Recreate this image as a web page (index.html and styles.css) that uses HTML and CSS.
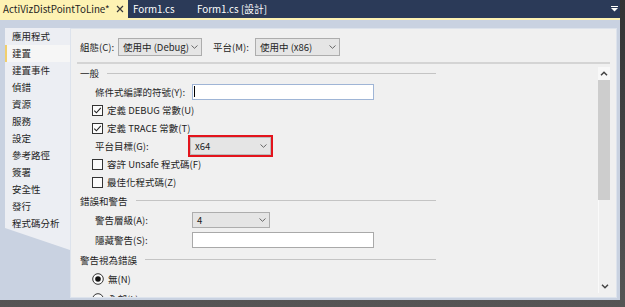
FILE: index.html
```html
<!DOCTYPE html>
<html lang="zh-Hant">
<head>
<meta charset="utf-8">
<title>Build</title>
<link rel="stylesheet" href="styles.css">
</head>
<body>
<div class="window">
  <div class="tabbar">
    <div class="tab active">
      <span>ActiVizDistPointToLine*</span>
      <svg class="close" width="8" height="8" viewBox="0 0 8 8"><path d="M1 1L7 7M7 1L1 7" stroke="#3a3a3a" stroke-width="1.2" fill="none"/></svg>
    </div>
    <div class="tab file">Form1.cs</div>
    <div class="tab design">Form1.cs [設計]</div>
    <div class="spacer"></div>
    <svg class="files-menu" width="7" height="6" viewBox="0 0 7 6"><rect x="0" y="0" width="7" height="1" fill="#fff"/><path d="M0 2H7L3.5 5.5Z" fill="#fff"/></svg>
  </div>
  <div class="accent"></div>
  <div class="main">
    <nav class="sidebar">
      <div class="nav-item">應用程式</div>
      <div class="nav-item selected">建置</div>
      <div class="nav-item">建置事件</div>
      <div class="nav-item">偵錯</div>
      <div class="nav-item">資源</div>
      <div class="nav-item">服務</div>
      <div class="nav-item">設定</div>
      <div class="nav-item">參考路徑</div>
      <div class="nav-item">簽署</div>
      <div class="nav-item">安全性</div>
      <div class="nav-item">發行</div>
      <div class="nav-item">程式碼分析</div>
    </nav>
    <section class="panel">
      <div class="config-row">
        <span class="cfg-label first">組態(C):</span>
        <div class="combo cfg-combo">
          <span>使用中 (Debug)</span>
          <svg class="chev" width="7" height="4" viewBox="0 0 7 4"><path d="M0.5 0.5L3.5 3.3L6.5 0.5" stroke="#666" stroke-width="1" fill="none"/></svg>
        </div>
        <span class="cfg-label second">平台(M):</span>
        <div class="combo cfg-combo wide">
          <span>使用中 (x86)</span>
          <svg class="chev" width="7" height="4" viewBox="0 0 7 4"><path d="M0.5 0.5L3.5 3.3L6.5 0.5" stroke="#666" stroke-width="1" fill="none"/></svg>
        </div>
      </div>
      <div class="sep"></div>
      <div class="scroll">
        <div class="form">
          <div class="section s18"><span>一般</span></div>
          <div class="row h19">
            <span class="label">條件式編譯的符號(Y):</span>
            <div class="textbox focused"><span class="caret"></span></div>
          </div>
          <div class="row check">
            <svg class="box" width="11" height="11" viewBox="0 0 11 11"><rect x="0.5" y="0.5" width="10" height="10" fill="#fbfbfb" stroke="#333"/><path d="M2.3 5.6L4.4 7.8L8.8 2.8" stroke="#222" stroke-width="1.1" fill="none"/></svg>
            <span>定義 DEBUG 常數(U)</span>
          </div>
          <div class="row check">
            <svg class="box" width="11" height="11" viewBox="0 0 11 11"><rect x="0.5" y="0.5" width="10" height="10" fill="#fbfbfb" stroke="#333"/><path d="M2.3 5.6L4.4 7.8L8.8 2.8" stroke="#222" stroke-width="1.1" fill="none"/></svg>
            <span>定義 TRACE 常數(T)</span>
          </div>
          <div class="row">
            <span class="label">平台目標(G):</span>
            <div class="highlight">
              <div class="combo target">
                <span>x64</span>
                <svg class="chev" width="7" height="4" viewBox="0 0 7 4"><path d="M0.5 0.5L3.5 3.3L6.5 0.5" stroke="#666" stroke-width="1" fill="none"/></svg>
              </div>
            </div>
          </div>
          <div class="row check">
            <svg class="box" width="11" height="11" viewBox="0 0 11 11"><rect x="0.5" y="0.5" width="10" height="10" fill="#fbfbfb" stroke="#333"/></svg>
            <span>容許 Unsafe 程式碼(F)</span>
          </div>
          <div class="row check">
            <svg class="box" width="11" height="11" viewBox="0 0 11 11"><rect x="0.5" y="0.5" width="10" height="10" fill="#fbfbfb" stroke="#333"/></svg>
            <span>最佳化程式碼(Z)</span>
          </div>
          <div class="section s19"><span>錯誤和警告</span></div>
          <div class="row h20">
            <span class="label">警告層級(A):</span>
            <div class="combo level">
              <span>4</span>
              <svg class="chev" width="7" height="4" viewBox="0 0 7 4"><path d="M0.5 0.5L3.5 3.3L6.5 0.5" stroke="#666" stroke-width="1" fill="none"/></svg>
            </div>
          </div>
          <div class="row h20">
            <span class="label">隱藏警告(S):</span>
            <div class="textbox"></div>
          </div>
          <div class="section s19"><span>警告視為錯誤</span></div>
          <div class="row check h20">
            <svg class="box" width="12" height="12" viewBox="0 0 12 12"><circle cx="6" cy="6" r="5.3" fill="#fbfbfb" stroke="#333"/><circle cx="6" cy="6" r="2.8" fill="#111"/></svg>
            <span>無(N)</span>
          </div>
          <div class="row check h20">
            <svg class="box" width="12" height="12" viewBox="0 0 12 12"><circle cx="6" cy="6" r="5.3" fill="#fbfbfb" stroke="#333"/></svg>
            <span>全部(L)</span>
          </div>
        </div>
        <div class="scrollbar">
          <div class="sb-btn">
            <svg width="8" height="5" viewBox="0 0 8 5"><path d="M1 4.2L4 1.2L7 4.2" stroke="#444" stroke-width="1.5" fill="none"/></svg>
          </div>
          <div class="sb-thumb"></div>
          <div class="sb-track"></div>
          <div class="sb-btn down">
            <svg width="8" height="5" viewBox="0 0 8 5"><path d="M1 0.8L4 3.8L7 0.8" stroke="#444" stroke-width="1.5" fill="none"/></svg>
          </div>
        </div>
      </div>
    </section>
  </div>
</div>
</body>
</html>
```

FILE: styles.css
```css
* {
  box-sizing: border-box;
  margin: 0;
  padding: 0;
}

html, body {
  width: 625px;
  height: 307px;
  overflow: hidden;
}

body {
  background: linear-gradient(#333, #555);
  font-family: "Noto Sans CJK TC", "Noto Sans", sans-serif;
  font-size: 9.5px;
  color: #1e1e1e;
}

.window {
  width: 620px;
  height: 300px;
  display: flex;
  flex-direction: column;
  background: #c9d2e1;
  overflow: hidden;
}

/* Document tabs */
.tabbar {
  height: 18px;
  flex: none;
  background: #2b3a58;
  display: flex;
  align-items: stretch;
  font-size: 9.8px;
}

.tab {
  display: flex;
  align-items: center;
  color: #fff;
  line-height: 18px;
  white-space: nowrap;
}

.tab.active {
  width: 128px;
  padding-left: 3px;
  background: #fdf2b3;
  color: #1e1e1e;
}

.tab.active .close {
  margin-left: auto;
  margin-right: 4px;
}

.tab.file {
  width: 69px;
  padding-left: 5px;
}

.spacer {
  flex: 1;
}

.files-menu {
  align-self: center;
  margin-right: 2px;
}

.accent {
  height: 2px;
  flex: none;
  background: #fdf2b3;
}

/* Body */
.main {
  flex: 1;
  min-height: 0;
  display: flex;
  padding: 8px 3px 2px 5px;
}

.sidebar {
  width: 65px;
  flex: none;
  background: #eceef3;
  clip-path: polygon(0 0, 100% 0, 100% 222px, 0 200px);
}

.nav-item {
  height: 17px;
  line-height: 17px;
  padding-left: 7px;
  white-space: nowrap;
}

.nav-item.selected {
  background: #f6f6f6;
  border-left: 2px solid #f1cf6d;
  padding-left: 5px;
}

.panel {
  flex: 1;
  min-height: 0;
  display: flex;
  flex-direction: column;
  background: #f0f0f0;
  border: 1px solid #dde3ec;
  overflow: hidden;
}

.config-row {
  display: flex;
  align-items: center;
  padding: 9px 0 0 9px;
  white-space: nowrap;
}

.cfg-label.first {
  width: 38px;
}

.cfg-label.second {
  width: 42px;
  margin-left: 11px;
}

.combo {
  display: flex;
  align-items: center;
  justify-content: space-between;
  background: #e5e5e5;
  border: 1px solid #adadad;
  padding: 0 3px 0 4px;
  white-space: nowrap;
  line-height: 14px;
}

.cfg-combo {
  width: 84px;
  height: 18px;
}

.cfg-combo.wide {
  width: 85px;
}

.sep {
  height: 2px;
  flex: none;
  margin: 6px 6px 0;
  background: #d4d4d4;
}

.scroll {
  height: 233px;
  flex: none;
  margin: 0 6px;
  display: flex;
  overflow: hidden;
}

.form {
  flex: 1;
  padding-left: 3px;
  overflow: hidden;
}

.section {
  display: flex;
  align-items: center;
  width: 356px;
  height: 18px;
  white-space: nowrap;
}

.section.s19 {
  height: 19px;
}

.section::after {
  content: "";
  flex: 1;
  height: 1px;
  margin-left: 8px;
  background: #c4c4c4;
}

.row {
  display: flex;
  align-items: center;
  height: 18px;
  padding-left: 15px;
  white-space: nowrap;
}

.row.h19 {
  height: 19px;
}

.row.h20 {
  height: 20px;
}

.row.check {
  padding-left: 12px;
}

.row.check .box {
  margin-right: 4px;
  flex: none;
}

.label {
  width: 97px;
  flex: none;
}

.textbox {
  width: 182px;
  height: 16px;
  flex: none;
  background: #fff;
  border: 1px solid #a9a9a9;
  display: flex;
  align-items: center;
}

.textbox.focused {
  border-color: #9fb5d6;
}

.caret {
  width: 1px;
  height: 11px;
  margin-left: 1px;
  background: #000;
}

.highlight {
  margin-left: -4px;
  border: 2px solid #e3141c;
}

.combo.target {
  width: 81px;
  height: 18px;
  border-color: #bcbcbc;
}

.combo.level {
  width: 78px;
  height: 16px;
}

/* Scrollbar */
.scrollbar {
  width: 12px;
  flex: none;
  margin: 3px 0 4px;
  display: flex;
  flex-direction: column;
  background: #f0f0f0;
}

.sb-btn {
  height: 13px;
  display: flex;
  align-items: center;
  justify-content: center;
  background: #f8f8f8;
}

.sb-btn.down {
  background: #f0f0f0;
  border-left: 1px solid #fafafa;
}

.sb-thumb {
  height: 120px;
  background: #cdcdcd;
}

.sb-track {
  flex: 1;
  border-left: 1px solid #fafafa;
}
```
